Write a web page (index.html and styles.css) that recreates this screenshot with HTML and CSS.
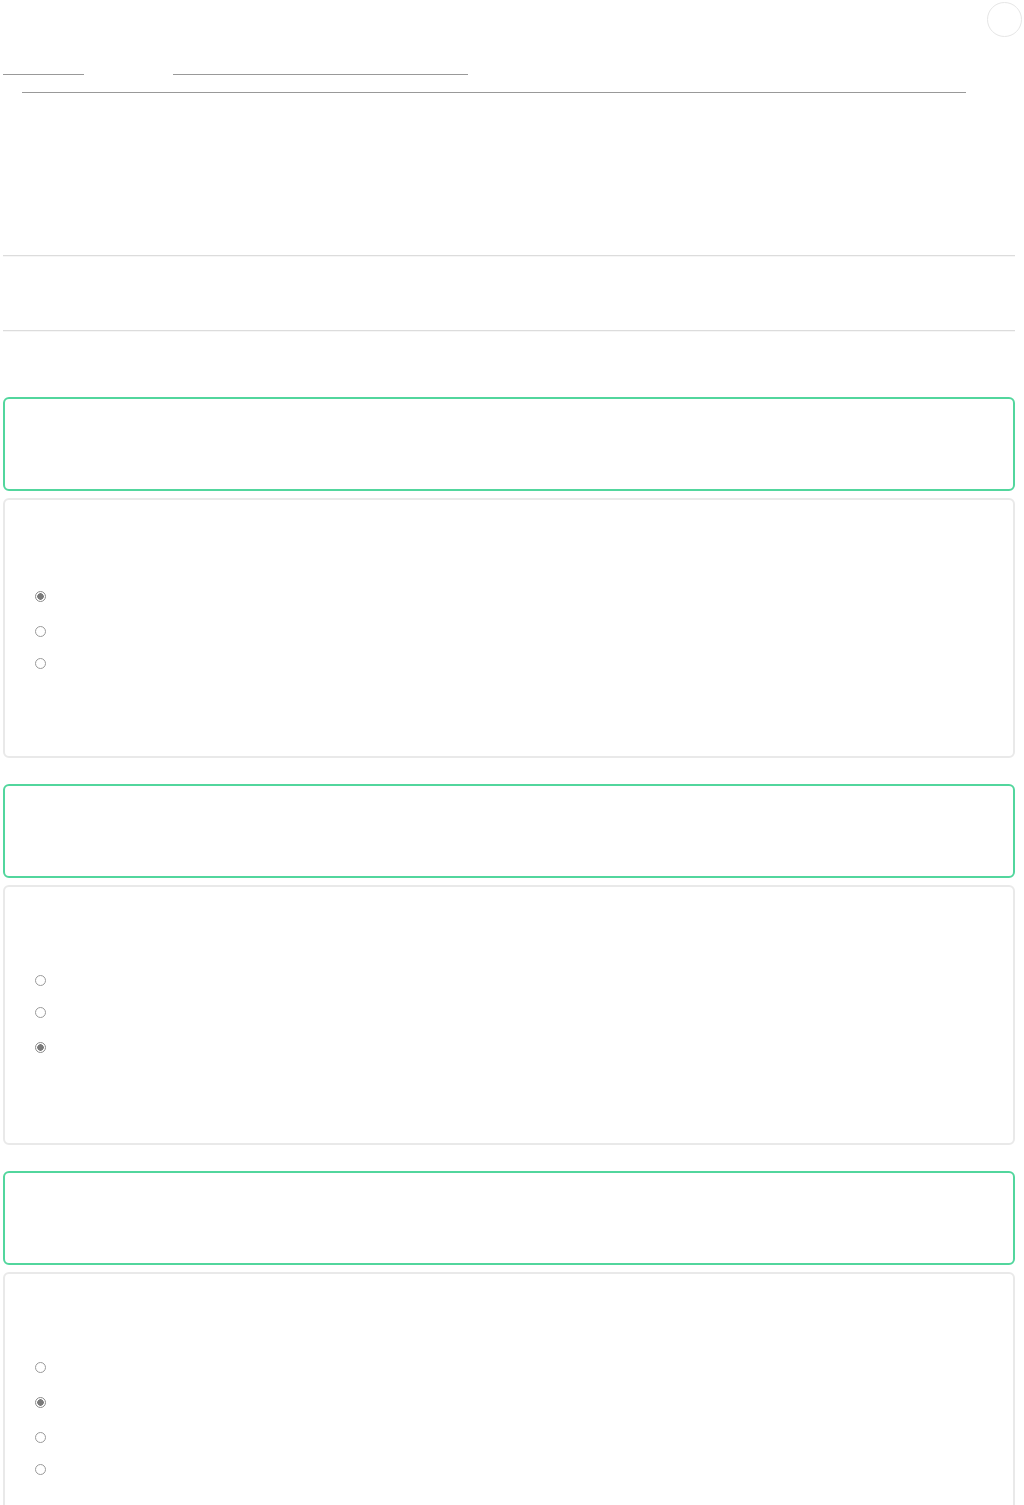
FILE: index.html
```
<!DOCTYPE html>
<html lang="en">
<head>
    <meta charset="UTF-8">
    <title>Quiz Review</title>
    <link rel="stylesheet" href="styles.css">
</head>
<body>
    <header class="topbar">
        <div class="avatar" title="Account"></div>
    </header>

    <nav class="crumbs">
        <a href="#" class="crumb crumb-home">Dashboard</a>
        <a href="#" class="crumb crumb-course">Introduction to Web Accessibility</a>
    </nav>
    <div class="crumb-line">
        <a href="#" class="crumb crumb-lesson">Module 3 &middot; Semantic HTML and Landmarks &mdash; Review quiz attempt</a>
    </div>

    <section class="intro">
        <h1>Quiz review</h1>
        <p>Your answers are shown below.</p>
    </section>

    <hr class="rule">
    <div class="summary">Score: 2 / 3</div>
    <hr class="rule">

    <main class="quiz">
        <div class="question">
            <div class="question-head">Question 1</div>
            <div class="question-body">
                <p class="prompt">Which element marks the main content of a page?</p>
                <ul class="options">
                    <li class="option selected"><input type="radio" name="q1" checked disabled> &lt;main&gt;</li>
                    <li class="option"><input type="radio" name="q1" disabled> &lt;section&gt;</li>
                    <li class="option"><input type="radio" name="q1" disabled> &lt;div&gt;</li>
                </ul>
            </div>
        </div>

        <div class="question">
            <div class="question-head">Question 2</div>
            <div class="question-body">
                <p class="prompt">What does the alt attribute describe?</p>
                <ul class="options">
                    <li class="option"><input type="radio" name="q2" disabled> The file name</li>
                    <li class="option"><input type="radio" name="q2" disabled> The image size</li>
                    <li class="option selected"><input type="radio" name="q2" checked disabled> The image content</li>
                </ul>
            </div>
        </div>

        <div class="question">
            <div class="question-head">Question 3</div>
            <div class="question-body">
                <p class="prompt">Which heading should come first on a page?</p>
                <ul class="options">
                    <li class="option"><input type="radio" name="q3" disabled> h3</li>
                    <li class="option selected"><input type="radio" name="q3" checked disabled> h1</li>
                    <li class="option"><input type="radio" name="q3" disabled> h2</li>
                    <li class="option"><input type="radio" name="q3" disabled> h6</li>
                </ul>
            </div>
        </div>
    </main>
</body>
</html>
```

FILE: styles.css
```
* {
    margin: 0;
    padding: 0;
    box-sizing: border-box;
}

body {
    font-family: 'Liberation Sans', Arial, sans-serif;
    font-size: 14px;
    background: #fff;
    color: #fff;
    padding: 0 9px 0 3px;
}

.topbar {
    height: 38px;
    display: flex;
    justify-content: flex-end;
    align-items: flex-start;
    margin-right: -7px;
    padding-top: 2px;
}

.avatar {
    width: 35px;
    height: 35px;
    border-radius: 50%;
    border: 1px solid #e6e6e6;
}

/* breadcrumb links */
.crumbs {
    margin-top: 20px;
    display: flex;
    height: 17px;
}

.crumb {
    display: inline-block;
    color: #fff;
    text-decoration: none;
    line-height: 16px;
    height: 17px;
    border-bottom: 1px solid #999;
    white-space: nowrap;
    overflow: hidden;
}

.crumb-home {
    width: 81px;
}

.crumb-course {
    width: 295px;
    margin-left: 89px;
}

.crumb-line {
    margin-top: 1px;
    padding-left: 19px;
    height: 17px;
}

.crumb-lesson {
    width: 944px;
}

.intro {
    height: 162px;
    padding-top: 50px;
}

.intro h1 {
    font-size: 28px;
    font-weight: 600;
    line-height: 34px;
}

.intro p {
    margin-top: 10px;
}

.rule {
    border: none;
    border-top: 1px solid #dcdcdc;
    border-bottom: 1px solid #f6f6f6;
}

.summary {
    height: 73px;
    line-height: 73px;
}

.quiz {
    padding-top: 65px;
}

.question {
    margin-bottom: 26px;
}

.question-head {
    height: 94px;
    border: 2px solid #52d69d;
    border-radius: 6px;
    padding: 36px 20px;
    line-height: 18px;
    font-weight: 600;
}

.question-body {
    margin-top: 7px;
    border: 2px solid #e9e9e9;
    border-radius: 6px;
    padding: 45px 30px 77px;
}

.prompt {
    line-height: 20px;
    margin-bottom: 12px;
}

.options {
    list-style: none;
}

.option {
    display: flex;
    align-items: center;
    gap: 10px;
    height: 32px;
}

.option.selected {
    height: 38px;
}

.option input {
    appearance: none;
    -webkit-appearance: none;
    width: 11px;
    height: 11px;
    border: 1px solid #9a9a9a;
    border-radius: 50%;
    background: #fff;
    margin: 0;
}

.option input:checked {
    border-color: #8a8a8a;
    background: radial-gradient(circle, #7a7a7a 0, #7a7a7a 3px, #fff 3.5px);
}
```
